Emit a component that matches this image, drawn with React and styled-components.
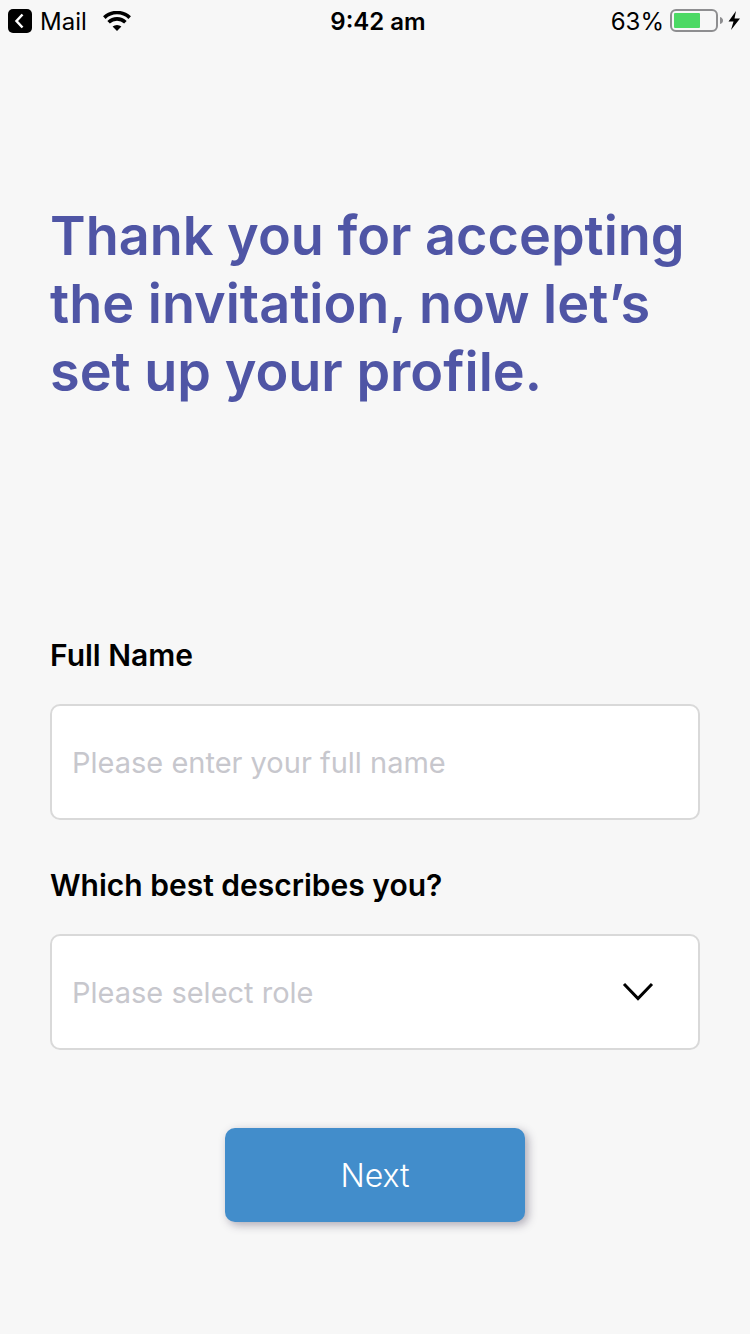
import React, { useState } from 'react';
import styled, { createGlobalStyle } from 'styled-components';

const roles = ['Manager', 'Employee', 'Contractor'];

export default function ProfileSetup() {
  const [fullName, setFullName] = useState('');
  const [role, setRole] = useState('');

  return (
    <Screen>
      <GlobalStyle />
      <StatusBar>
        <StatusGroup>
          <BackButton type="button">
            <svg width="24" height="24" viewBox="0 0 24 24">
              <rect width="24" height="24" rx="5" fill="#000" />
              <path d="M14.500 5.500L8.500 12L14.500 18.500" fill="none" stroke="#fff" strokeWidth="2.500" />
            </svg>
            Mail
          </BackButton>
          <WifiIcon />
        </StatusGroup>
        <Clock>9:42 am</Clock>
        <StatusGroup $end>
          63%
          <BatteryIcon />
        </StatusGroup>
      </StatusBar>
      <Content onSubmit={(e) => e.preventDefault()}>
        <Title>Thank you for accepting the invitation, now let’s set up your profile.</Title>
        <Field>
          <Label htmlFor="fullName">Full Name</Label>
          <TextInput
            id="fullName"
            value={fullName}
            placeholder="Please enter your full name"
            onChange={(e) => setFullName(e.target.value)}
          />
        </Field>
        <Field>
          <Label htmlFor="role">Which best describes you?</Label>
          <SelectWrapper>
            <Select id="role" value={role} $empty={!role} onChange={(e) => setRole(e.target.value)}>
              <option value="" hidden>Please select role</option>
              {roles.map((name) => (
                <option key={name} value={name}>{name}</option>
              ))}
            </Select>
            <Chevron width="32" height="20" viewBox="0 0 32 20">
              <path d="M2 2L16 16.500L30 2" fill="none" stroke="#000" strokeWidth="3" />
            </Chevron>
          </SelectWrapper>
        </Field>
        <NextButton type="submit">Next</NextButton>
      </Content>
    </Screen>
  );
}

function WifiIcon() {
  return (
    <svg width="28" height="20" viewBox="0 0 28 20">
      <g fill="none" stroke="#000" strokeWidth="3.600">
        <path d="M1.300 6.600A18.500 18.500 0 0 1 26.700 6.600" />
        <path d="M5.600 11.300A12 12 0 0 1 22.400 11.300" />
      </g>
      <path d="M14 20L9.600 15.600A6.500 6.500 0 0 1 18.400 15.600Z" />
    </svg>
  );
}

function BatteryIcon() {
  return (
    <svg width="72" height="24" viewBox="0 0 72 24">
      <rect x="1" y="1" width="46" height="21" rx="5" fill="none" stroke="#8e8e90" strokeWidth="2" />
      <rect x="4" y="4" width="26" height="15" rx="1" fill="#4cd964" />
      <path d="M50 8Q53 9 53 11.500Q53 14 50 15Z" fill="#8e8e90" />
      <path d="M66 2L58.500 12.500H63.500L61 21L70 9.500H64.500Z" />
    </svg>
  );
}

const GlobalStyle = createGlobalStyle`
  * {
    box-sizing: border-box;
  }

  body {
    margin: 0;
    background-color: #f7f7f7;
    font-family: Inter, sans-serif;
    color: #000;
  }

  button, input, select {
    font-family: inherit;
  }
`;

const Screen = styled.div`
  min-height: 100vh;
  background-color: #f7f7f7;
`;

const StatusBar = styled.header`
  display: grid;
  grid-template-columns: 1fr auto 1fr;
  align-items: center;
  height: 42px;
  padding: 0 8px;
  font-size: 24px;
`;

const StatusGroup = styled.div`
  display: flex;
  align-items: center;
  justify-content: ${({ $end }) => ($end ? 'flex-end' : 'flex-start')};
  gap: ${({ $end }) => ($end ? '6px' : '16px')};
`;

const BackButton = styled.button`
  display: flex;
  align-items: center;
  gap: 8px;
  padding: 0;
  border: none;
  background: none;
  color: #000;
  font-size: 24px;
`;

const Clock = styled.time`
  padding-left: 6px;
  font-weight: 600;
`;

const Content = styled.form`
  display: flex;
  flex-direction: column;
  padding: 160px 50px 112px;
`;

const Title = styled.h1`
  margin: 0 0 231px;
  color: #4f55a5;
  font-size: 54px;
  font-weight: 600;
  line-height: 68px;
`;

const Field = styled.div`
  display: flex;
  flex-direction: column;
  gap: 31px;
  margin-bottom: 47px;
`;

const Label = styled.label`
  font-size: 30px;
  font-weight: 600;
  line-height: 36px;
`;

const TextInput = styled.input`
  width: 100%;
  height: 116px;
  padding: 0 20px;
  border: 2px solid #d9d9d9;
  border-radius: 10px;
  background-color: #fff;
  color: #000;
  font-size: 29px;

  &::placeholder {
    color: #c7c7cd;
  }
`;

const SelectWrapper = styled.div`
  position: relative;
`;

const Select = styled(TextInput).attrs({ as: 'select' })`
  display: block;
  appearance: none;
  color: ${({ $empty }) => ($empty ? '#c7c7cd' : '#000')};
`;

const Chevron = styled.svg`
  position: absolute;
  top: 48px;
  right: 46px;
  pointer-events: none;
`;

const NextButton = styled.button`
  align-self: center;
  width: 300px;
  height: 94px;
  margin-top: 31px;
  border: none;
  border-radius: 10px;
  background-color: #428dcb;
  box-shadow: 3px 3px 10px rgba(60, 50, 80, 0.4);
  color: #fff;
  font-size: 32px;
  font-weight: 300;
`;
